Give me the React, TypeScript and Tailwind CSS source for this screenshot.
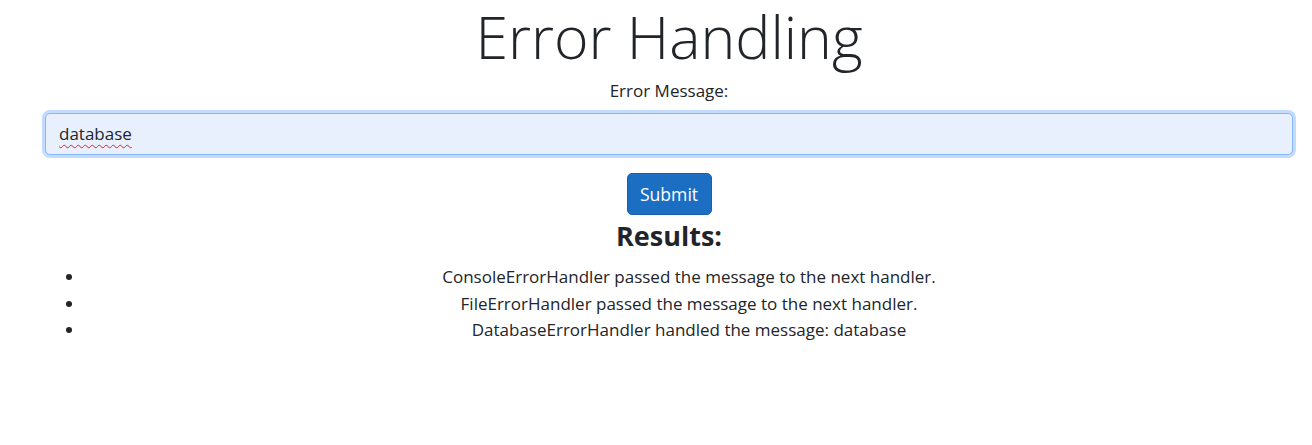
const results = [
  "ConsoleErrorHandler passed the message to the next handler.",
  "FileErrorHandler passed the message to the next handler.",
  "DatabaseErrorHandler handled the message: database",
]

export default function App() {
  return (
    <div className="min-h-[445px] bg-white font-['Open_Sans',sans-serif] text-[17px] leading-[26.4px] text-[#212529]">
      <div className="ml-[45px] mr-[19px] flex flex-col items-center">
        <h1 className="text-[59px] font-light leading-[72px]">Error Handling</h1>
        <label className="mt-[6px] mb-[9px]">Error Message:</label>
        <div className="flex h-[42px] w-full items-center rounded-[5px] border border-[#86b7fe] bg-[#e8f0fe] px-[13px] shadow-[0_0_0_3px_#c2dbfe]">
          <span className="underline decoration-[#e5202e] decoration-wavy decoration-1 underline-offset-[4px]">database</span>
        </div>
        <button className="mt-[18px] h-[42px] w-[85px] rounded-[5px] border border-[#1861ac] bg-[#1b6ec2] text-[17.6px] text-white">
          Submit
        </button>
        <h3 className="mt-[2px] text-[27px] font-bold leading-[37px]">Results:</h3>
        <ul className="mt-[10px] w-full list-disc pl-[40px] text-center">
          {results.map((r) => (
            <li key={r}>{r}</li>
          ))}
        </ul>
      </div>
    </div>
  )
}
